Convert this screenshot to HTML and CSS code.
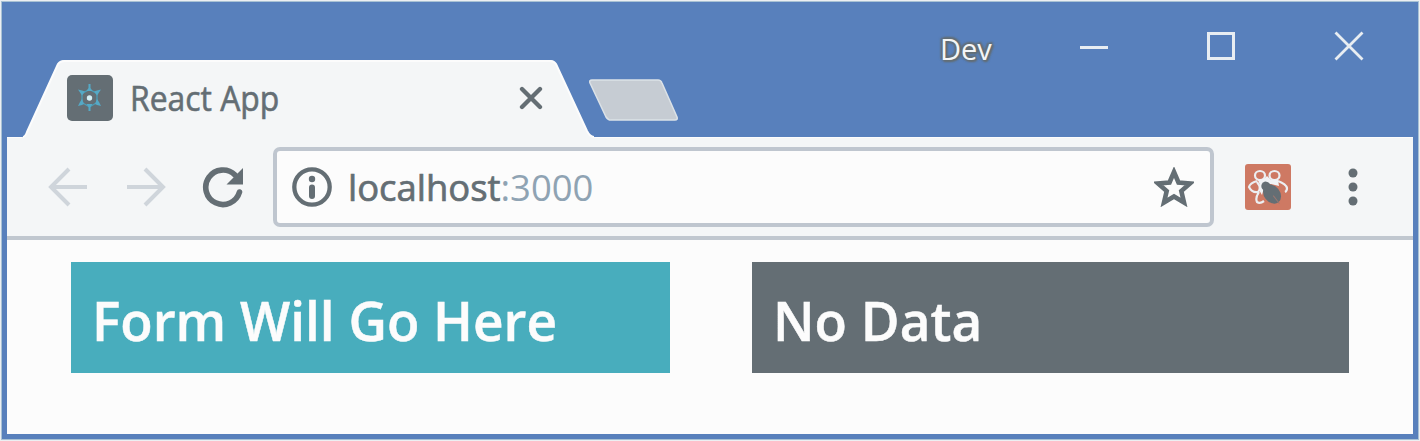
FILE: index.html
```html
<!DOCTYPE html>
<html lang="en">
<head>
<meta charset="utf-8">
<title>React App</title>
<link rel="stylesheet" href="styles.css">
</head>
<body>
<div class="window">
  <header class="titlebar">
    <div class="tab">
      <svg class="tab-shape" viewBox="0 0 572 78" width="572" height="78"><path d="M0 78V77Q3 77 5 72L36 4Q38 0 43 0H528Q532 0 534 4L565 71Q568 77 572 77V78Z" fill="#f4f6f7"/><path d="M1 77Q3 77 5 72L36 4Q38 1 43 1H528Q532 1 534 4L565 71Q568 77 572 77" fill="none" stroke="#fcfcfc" stroke-width="2"/></svg>
      <svg class="favicon" viewBox="0 0 46 46" width="46" height="46"><rect width="46" height="46" rx="5" fill="#646e74"/><path d="M22.500 14.500L30 18.500V27.500L22.500 32L15 27.500V18.500Z" fill="none" stroke="#4a9db8" stroke-width="1.300"/><g fill="#55a9c6"><path d="M21.500 9h2v4l2 3h-6l2-3zM21.500 36h2v-4l2-3h-6l2 3zM11 14.500l4 1 3 1-3 4-2-3zM34 14.500l-4 1-3 1 3 4 2-3zM11 31l2-4 2-3 2 5-2 1zM34 31l-2-4-2-3-2 5 2 1z"/></g><circle cx="22.500" cy="23" r="2.700" fill="#d5f0f7"/></svg>
      <span class="tab-title">React App</span>
      <svg class="tab-close" viewBox="0 0 24 24" width="24" height="24"><path d="M3 3L21 21M21 3L3 21" stroke="#646e74" stroke-width="4.300" stroke-linecap="round"/></svg>
    </div>
    <svg class="new-tab" viewBox="0 0 90 42" width="90" height="42"><path d="M3 1H69Q72 1 73 4L88 38Q89 41 86 41H22Q19 41 17 38L1 4Q0 1 3 1Z" fill="#c6ccd3" stroke="#dce2e7" stroke-width="1.500"/></svg>
    <div class="controls">
      <span class="profile">Dev</span>
      <svg viewBox="0 0 30 30" width="30" height="30"><path d="M0 16.500H28" stroke="#e8edf2" stroke-width="3"/></svg>
      <svg viewBox="0 0 30 30" width="30" height="30"><rect x="1.500" y="2.500" width="25" height="25" fill="none" stroke="#e8edf2" stroke-width="3"/></svg>
      <svg viewBox="0 0 30 30" width="30" height="30"><path d="M1.500 1.500L28.500 28.500M28.500 1.500L1.500 28.500" stroke="#e8edf2" stroke-width="2.800"/></svg>
    </div>
  </header>
  <nav class="toolbar">
    <svg class="back" viewBox="0 0 40 40" width="40" height="40"><path d="M39 20H3M21 2L3 20L21 38" fill="none" stroke="#cfd5db" stroke-width="4"/></svg>
    <svg class="forward" viewBox="0 0 40 40" width="40" height="40"><path d="M1 20H37M19 2L37 20L19 38" fill="none" stroke="#cfd5db" stroke-width="4"/></svg>
    <svg class="reload" viewBox="0 0 42 42" width="42" height="42"><path d="M37.500 26A17.200 17.200 0 1 1 33 9" fill="none" stroke="#646e74" stroke-width="5.600" stroke-linecap="round"/><path d="M41 2V18.500H24.500Z" fill="#646e74"/></svg>
    <div class="address">
      <svg class="info" viewBox="0 0 40 40" width="40" height="40"><circle cx="20" cy="20" r="17.700" fill="none" stroke="#646e74" stroke-width="4.300"/><circle cx="20" cy="12" r="3.200" fill="#646e74"/><path d="M20 20.500V29" stroke="#646e74" stroke-width="6" stroke-linecap="round"/></svg>
      <span class="url">localhost<span class="port">:3000</span></span>
      <svg class="star" viewBox="0 0 40 40" width="40" height="40"><path d="M20 5L24.500 15.500L36 16.500L27.300 24L30 35.500L20 29.500L10 35.500L12.700 24L4 16.500L15.500 15.500Z" fill="none" stroke="#646e74" stroke-width="4.600"/></svg>
    </div>
    <svg class="extension" viewBox="0 0 46 46" width="46" height="46"><rect width="46" height="46" rx="3" fill="#ce7963"/><g fill="none" stroke="#eceff2" stroke-width="2.200"><ellipse cx="15" cy="11.500" rx="5" ry="4.500"/><ellipse cx="29.500" cy="11.500" rx="5" ry="4.500"/><path d="M12 17Q5 19 4 23Q7 29 13 28Q17 24 12 18M33 17Q41 20 42 24Q42 27 40 28M14 28Q10 34 12 38Q15 40 19 37"/></g><path d="M13 16L19 15L22 12L26 16L33 16L34 22L26 20L20 20L17 31L14 26L15 21Z" fill="#f1f3f5"/><g transform="translate(27 30) rotate(-38)" fill="#646e74"><ellipse rx="8" ry="10.500"/><circle cy="-10" r="4.500"/><path d="M0 2V12" stroke="#9a7770"/></g></svg>
    <svg class="menu" viewBox="0 0 10 38" width="10" height="38"><g fill="#646e74"><circle cx="5" cy="5" r="4.500"/><circle cx="5" cy="19" r="4.500"/><circle cx="5" cy="33" r="4.500"/></g></svg>
  </nav>
  <main class="page">
    <section class="panel panel-form"><h4 class="heading">Form Will Go Here</h4></section>
    <section class="panel panel-data"><h4 class="heading">No Data</h4></section>
  </main>
</div>
</body>
</html>
```
FILE: styles.css
```css
* { box-sizing: border-box; }
body {
  margin: 0;
  padding: 2px;
  height: 441px;
  background: #eceff2;
  font-family: "Open Sans", "Noto Sans", sans-serif;
  color: #646e74;
}
svg { display: block; flex: none; }
.window {
  height: 437px;
  display: flex;
  flex-direction: column;
  background: #fcfcfc;
  border: 5px solid #5880bc;
  border-top: 0;
  outline: 1px solid #a9c2d4;
}
.titlebar {
  height: 135px;
  flex: none;
  background: #5880bc;
  display: flex;
  align-items: flex-start;
}
.tab {
  position: relative;
  width: 572px;
  height: 78px;
  margin: 58px 0 0 15px;
  padding: 15px 51px 0 45px;
  display: flex;
  align-items: flex-start;
}
.tab-shape { position: absolute; left: 0; top: 0; }
.favicon, .tab-title, .tab-close { position: relative; }
.tab-title {
  margin-left: 17px;
  font-size: 34px;
  line-height: 46px;
  white-space: nowrap;
  transform: scaleX(0.937);
  transform-origin: left;
  -webkit-text-stroke: 0.6px;
}
.tab-close { margin: 11px 0 0 auto; }
.new-tab { margin: 77px 0 0 -5px; }
.controls {
  margin: 29px 49px 0 auto;
  display: flex;
  align-items: flex-start;
}
.controls svg { margin-left: 97px; }
.profile {
  width: 52px;
  margin-right: -9px;
  color: #f4f6f7;
  font-size: 29px;
  line-height: 36px;
  text-shadow: 0 0 2px #646e74, 0 0 3px #646e74, 2px 1px 2px #646e74, -2px -1px 2px #646e74, 1px 2px 2px #646e74, 1px -2px 2px #646e74;
}
.toolbar {
  height: 103px;
  flex: none;
  display: flex;
  align-items: center;
  padding-left: 41px;
  background: #f4f6f7;
  border-top: 1px solid #fcfcfc;
  border-bottom: 4px solid #c0c7cf;
}
.forward { margin-left: 38px; }
.reload { margin-left: 36px; }
.address {
  width: 941px;
  height: 80px;
  margin-left: 29px;
  padding: 0 16px 0 15px;
  display: flex;
  align-items: center;
  background: #fcfcfc;
  border: 4px solid #bfc6cf;
  border-radius: 7px;
}
.url {
  margin-left: 16px;
  font-size: 37px;
  line-height: 50px;
  white-space: nowrap;
  transform: scaleX(0.984);
  transform-origin: left;
  -webkit-text-stroke: 0.7px;
}
.port { color: #8fa3b3; -webkit-text-stroke: 0; }
.star { margin-left: auto; }
.extension { margin-left: 31px; }
.menu { margin-left: 57px; }
.page {
  flex: 1;
  display: grid;
  grid-template-columns: 599px 597px;
  column-gap: 82px;
  align-content: start;
  padding: 22px 0 0 64px;
}
.panel { height: 111px; padding-left: 21px; }
.panel-form { background: #48adbd; }
.panel-data { background: #646e74; }
.heading {
  margin: 0;
  color: #fcfcfc;
  font-size: 54px;
  font-weight: 600;
  line-height: 117px;
  white-space: nowrap;
  transform: scaleX(0.983);
  transform-origin: left;
  width: max-content;
  -webkit-text-stroke: 0.5px;
}
```
